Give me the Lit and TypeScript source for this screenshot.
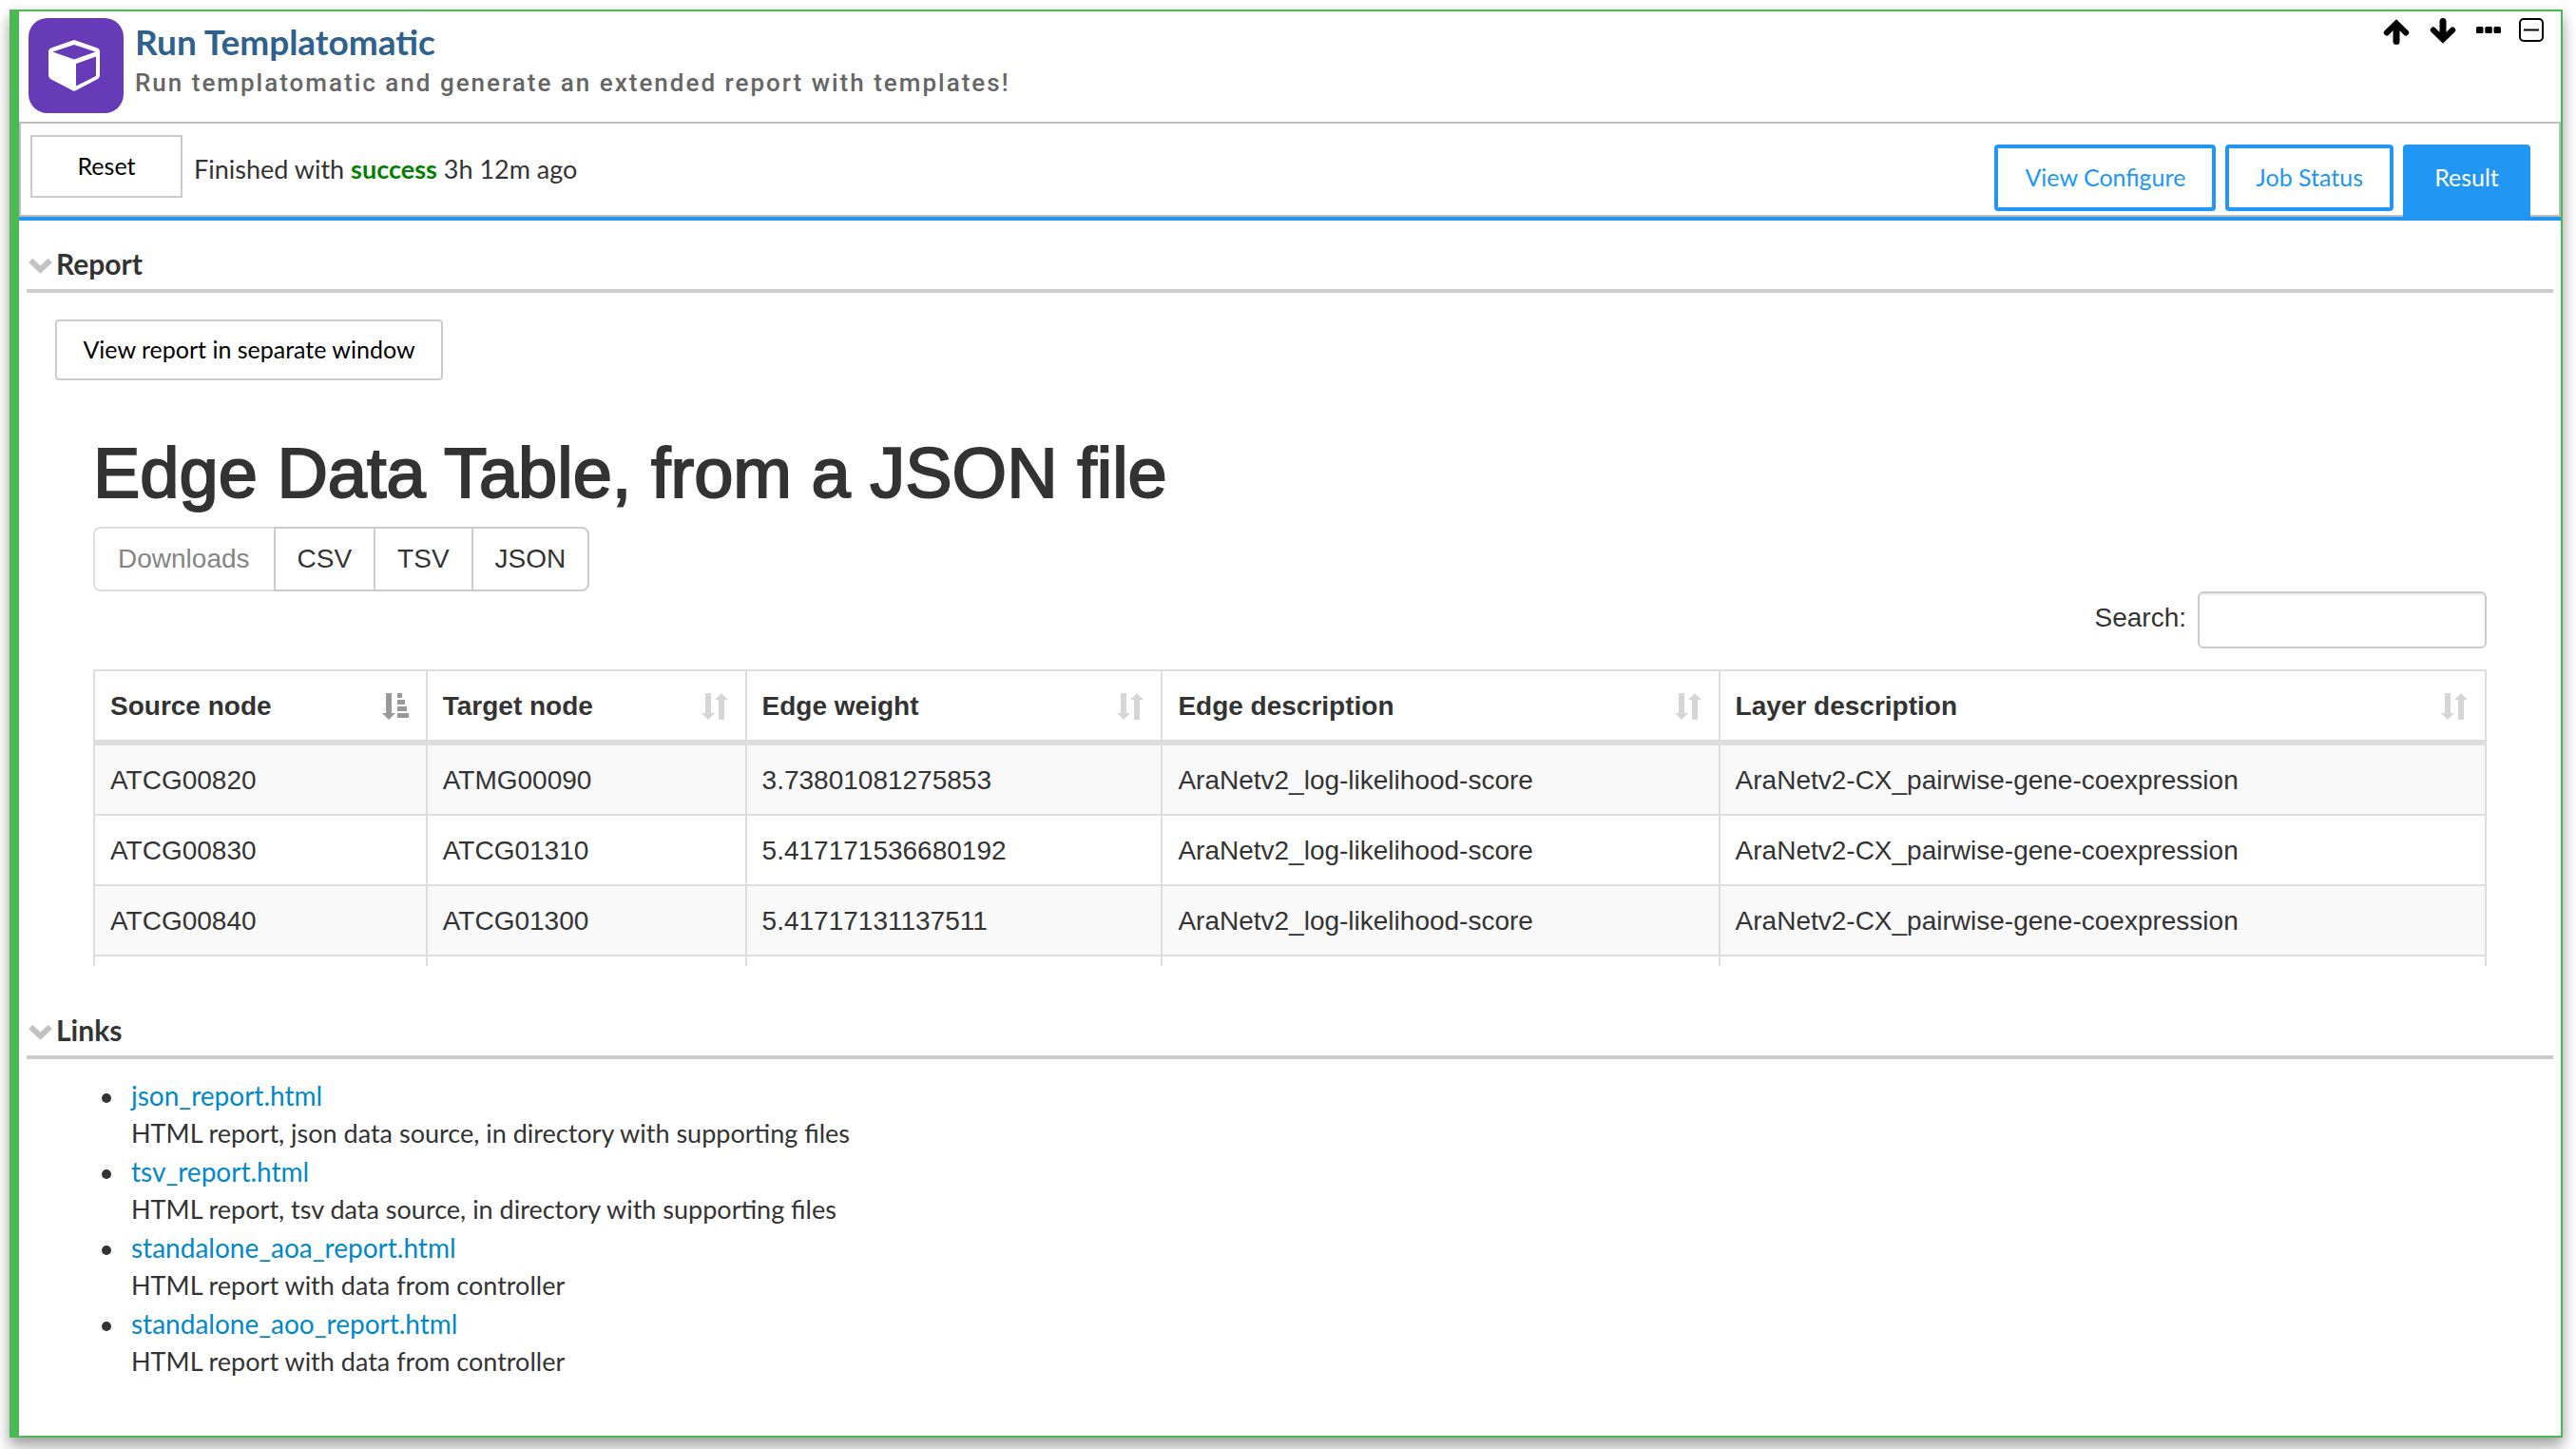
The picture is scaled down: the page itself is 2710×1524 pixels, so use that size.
import { LitElement, html, css, svg, nothing } from "lit";
import { customElement, state } from "lit/decorators.js";

interface Edge {
  source: string;
  target: string;
  weight: string;
}

const EDGES: Edge[] = [
  { source: "ATCG00820", target: "ATMG00090", weight: "3.73801081275853" },
  { source: "ATCG00830", target: "ATCG01310", weight: "5.417171536680192" },
  { source: "ATCG00840", target: "ATCG01300", weight: "5.41717131137511" },
];

const COLUMNS = [
  { label: "Source node", cls: "c-source" },
  { label: "Target node", cls: "c-target" },
  { label: "Edge weight", cls: "c-weight" },
  { label: "Edge description", cls: "c-edge" },
  { label: "Layer description", cls: "c-layer" },
];

const LINKS = [
  { file: "json_report.html", note: "HTML report, json data source, in directory with supporting files" },
  { file: "tsv_report.html", note: "HTML report, tsv data source, in directory with supporting files" },
  { file: "standalone_aoa_report.html", note: "HTML report with data from controller" },
  { file: "standalone_aoo_report.html", note: "HTML report with data from controller" },
];

const sortedIcon = svg`<path d="M4 0h6v21h4l-7 7-7-7h4z M16 0h5v5h-5z M16 7h8v5h-8z M16 14h10v5h-10z M16 21h12v5h-12z"/>`;
const sortableIcon = svg`<path d="M4 0h6v21h4l-7 7-7-7h4z M18 28h6v-21h4l-7-7-7 7h4z"/>`;

@customElement("report-table")
export class ReportTable extends LitElement {
  static styles = css`
    :host {
      display: block;
      font-family: "Liberation Sans", Arial, sans-serif;
      font-size: 28px;
      line-height: 40px;
      color: #333;
    }
    .title {
      margin: 0;
      padding-top: 2px;
      font-size: 74px;
      line-height: 80px;
      font-weight: 400;
      -webkit-text-stroke: 2px #333;
    }
    .downloads {
      display: flex;
      margin-top: 16px;
    }
    .btn {
      box-sizing: border-box;
      height: 68px;
      padding: 0 23px;
      border: 2px solid #ccc;
      margin-left: -2px;
      background: #fff;
      color: #333;
      font: inherit;
    }
    .btn:first-child {
      margin-left: 0;
      border-radius: 8px 0 0 8px;
      border-right: 0;
      border-color: #ddd;
      color: #858585;
      padding: 0 27px 0 24px;
    }
    .btn:last-child {
      border-radius: 0 8px 8px 0;
    }
    .search {
      display: flex;
      justify-content: flex-end;
      gap: 12px;
      line-height: 56px;
    }
    .search input {
      box-sizing: border-box;
      width: 304px;
      height: 60px;
      padding: 0 12px;
      border: 2px solid #ccc;
      border-radius: 6px;
      box-shadow: inset 0 2px 2px rgba(0, 0, 0, 0.08);
      font: inherit;
      color: inherit;
      background: #fff;
    }
    .grid {
      width: 100%;
      margin-top: 22px;
      table-layout: fixed;
      border-collapse: separate;
      border-spacing: 0;
      border-left: 2px solid #ddd;
      border-top: 2px solid #ddd;
    }
    .c-source { width: 13.9%; }
    .c-target { width: 13.35%; }
    .c-weight { width: 17.4%; }
    .c-edge { width: 23.3%; }
    .grid th,
    .grid td {
      box-sizing: border-box;
      padding: 17px 16px 15px;
      border-right: 2px solid #ddd;
      border-bottom: 2px solid #ddd;
      text-align: left;
      white-space: nowrap;
    }
    .grid th {
      padding-right: 18px;
      border-bottom-width: 6px;
    }
    .grid tbody tr:nth-child(odd) {
      background: #f9f9f9;
    }
    .grid .tail td {
      padding: 5px 16px;
      border-bottom: 0;
      background: #fff;
    }
    .head {
      display: flex;
      align-items: center;
      justify-content: space-between;
      font-weight: 700;
    }
    .sort {
      display: flex;
      padding: 0;
      border: 0;
      background: none;
      color: #d6d6d6;
    }
    .sort.active {
      color: #999;
    }
    .sort svg {
      width: 28px;
      height: 28px;
      fill: currentColor;
    }
  `;

  render() {
    return html`
      <h1 class="title">Edge Data Table, from a JSON file</h1>
      <div class="downloads">
        <button class="btn" disabled>Downloads</button>
        <button class="btn">CSV</button>
        <button class="btn">TSV</button>
        <button class="btn">JSON</button>
      </div>
      <div class="search">
        <label for="search">Search:</label>
        <input id="search" type="search" />
      </div>
      <table class="grid">
        <thead>
          <tr>
            ${COLUMNS.map(
              (c, i) => html`<th class=${c.cls} scope="col">
                <div class="head">
                  <span>${c.label}</span>
                  <button class=${i === 0 ? "sort active" : "sort"} aria-label="Sort by ${c.label}">
                    <svg viewBox="0 0 28 28" aria-hidden="true">${i === 0 ? sortedIcon : sortableIcon}</svg>
                  </button>
                </div>
              </th>`
            )}
          </tr>
        </thead>
        <tbody>
          ${EDGES.map(
            (e) => html`<tr>
              <td>${e.source}</td>
              <td>${e.target}</td>
              <td>${e.weight}</td>
              <td>AraNetv2_log-likelihood-score</td>
              <td>AraNetv2-CX_pairwise-gene-coexpression</td>
            </tr>`
          )}
          <tr class="tail">
            <td></td><td></td><td></td><td></td><td></td>
          </tr>
        </tbody>
      </table>
    `;
  }
}

@customElement("app-root")
export class AppRoot extends LitElement {
  static styles = css`
    :host {
      display: block;
      box-sizing: border-box;
      min-height: 100vh;
      padding: 10px 14px 12px 10px;
      background: #fff;
      font-family: Lato, "Open Sans", sans-serif;
      font-size: 27px;
      line-height: 40px;
      color: #333;
    }
    button {
      font-family: inherit;
      cursor: pointer;
    }
    .card {
      box-sizing: border-box;
      min-height: calc(100vh - 22px);
      border: 2px solid #4bb854;
      border-left-width: 10px;
      background: #fff;
      box-shadow: 0 12px 16px rgba(0, 0, 0, 0.24), 0 4px 12px rgba(0, 0, 0, 0.2);
    }
    .header {
      display: flex;
      gap: 12px;
      padding: 7px 16px 9px 10px;
    }
    .logo {
      width: 100px;
      height: 100px;
      flex: none;
    }
    .names {
      flex: 1;
      padding-top: 2px;
    }
    .name {
      margin: 0;
      font-size: 37px;
      line-height: 46px;
      font-weight: 700;
      color: #2e618d;
    }
    .about {
      margin: 0;
      font-family: Roboto, sans-serif;
      font-size: 26px;
      font-weight: 500;
      line-height: 40px;
      letter-spacing: 2px;
      color: #666;
    }
    .tools {
      display: flex;
      align-items: flex-start;
      gap: 20px;
    }
    .tool {
      display: flex;
      padding: 0;
      border: 0;
      background: none;
      color: #000;
    }
    .tool svg {
      width: 28px;
      height: 28px;
      overflow: visible;
    }
    .toolbar {
      display: flex;
      align-items: flex-start;
      box-sizing: border-box;
      height: 100px;
      padding: 12px 30px 0 10px;
      border: 2px solid #bdbdbd;
    }
    .plain {
      box-sizing: border-box;
      padding: 0 24px 2px;
      border: 2px solid #ccc;
      background: #fff;
      color: #000;
      font-size: 25px;
    }
    .reset {
      width: 160px;
      height: 66px;
    }
    .status {
      flex: 1;
      margin: 16px 12px 0;
    }
    .ok {
      color: #008000;
      font-weight: 700;
    }
    .tabs {
      display: flex;
      align-items: flex-start;
      gap: 10px;
      margin-top: 10px;
    }
    .tab {
      box-sizing: border-box;
      min-width: 134px;
      height: 70px;
      padding: 0 28px 2px;
      border: 4px solid #2196f3;
      border-radius: 4px;
      background: #fff;
      color: #2196f3;
      font-size: 25px;
      line-height: 60px;
    }
    .tab.on {
      height: 76px;
      padding-bottom: 8px;
      border-radius: 4px 4px 0 0;
      background: #2196f3;
      color: #fff;
    }
    .rule {
      height: 4px;
      background: #2196f3;
    }
    .section {
      margin: 0 8px;
    }
    .section + .section {
      margin-top: 22px;
    }
    .section-head {
      margin: 0;
      border-bottom: 4px solid #ccc;
      font-size: 30px;
      line-height: 40px;
    }
    .toggle {
      display: flex;
      align-items: center;
      gap: 4px;
      width: 100%;
      padding: 25px 0 7px 2px;
      border: 0;
      background: none;
      color: #333;
      font-size: 30px;
      font-weight: 700;
      line-height: 40px;
    }
    .toggle svg {
      width: 25px;
      height: 17px;
      margin-top: 4px;
    }
    .report {
      padding: 28px 70px 0 30px;
    }
    .view {
      min-width: 408px;
      height: 64px;
      border-radius: 4px;
    }
    .frame {
      display: block;
      margin: 56px 0 0 40px;
    }
    .links {
      margin: 0;
      padding: 18px 0 48px 110px;
      font-size: 28px;
      list-style: none;
    }
    .links li::before {
      content: "";
      display: inline-block;
      width: 10px;
      height: 10px;
      margin: 0 21px 0 -31px;
      border-radius: 50%;
      background: #333;
      vertical-align: 3px;
    }
    .links a {
      color: #08c;
      text-decoration: none;
    }
    .note {
      display: block;
      font-size: 27px;
    }
  `;

  @state() private open = { report: true, links: true };

  private sectionHead(key: "report" | "links", label: string) {
    return html`<h2 class="section-head">
      <button
        class="toggle"
        aria-expanded=${this.open[key]}
        @click=${() => (this.open = { ...this.open, [key]: !this.open[key] })}
      >
        <svg viewBox="0 0 25 17" aria-hidden="true">
          <path d="M2.200 3 12.500 12.600 22.800 3" fill="none" stroke="#c2c2c2" stroke-width="6" />
        </svg>
        ${label}
      </button>
    </h2>`;
  }

  render() {
    return html`
      <main class="card">
        <header class="header">
          <svg class="logo" viewBox="0 0 100 100" aria-hidden="true">
            <rect width="100" height="100" rx="20" fill="#673ab7" />
            <path
              d="M48 23 23.500 31.500Q21 32.500 21 35V60Q21 62.500 23 64L46 76Q48 77.300 50 76L73 64Q75 62.500 75 60V35Q75 32.500 72.500 31.500Z"
              fill="#fff"
            />
            <path d="M48 28 70.500 35.500 48 43.500 25.500 35.500Z M50 48 71 40.500V61L50 71.500Z" fill="#673ab7" />
          </svg>
          <div class="names">
            <h1 class="name">Run Templatomatic</h1>
            <p class="about">Run templatomatic and generate an extended report with templates!</p>
          </div>
          <div class="tools">
            <button class="tool" aria-label="Move up">
              <svg viewBox="0 0 28 28" fill="none" stroke="#000" stroke-width="7" stroke-linecap="round">
                <path d="M15 7V24.500" />
                <path d="M4.800 15.500 15 5.500 25.200 15.500" stroke-width="6" />
              </svg>
            </button>
            <button class="tool" aria-label="Move down">
              <svg viewBox="0 0 28 28" fill="none" stroke="#000" stroke-width="7" stroke-linecap="round">
                <path d="M16 3.500V20" />
                <path d="M5.800 12.500 16 22.500 26.200 12.500" stroke-width="6" />
              </svg>
            </button>
            <button class="tool" aria-label="More">
              <svg viewBox="0 0 28 28">
                <rect x="3" y="9" width="7.500" height="7" rx="1.500" />
                <rect x="12.300" y="9" width="7.500" height="7" rx="1.500" />
                <rect x="21.500" y="9" width="7.500" height="7" rx="1.500" />
              </svg>
            </button>
            <button class="tool" aria-label="Collapse">
              <svg viewBox="0 0 28 28" fill="none" stroke="#000" stroke-width="2">
                <rect x="1" y="1" width="24" height="23" rx="4" />
                <path d="M5 12.500H21" />
              </svg>
            </button>
          </div>
        </header>

        <div class="toolbar">
          <button class="plain reset">Reset</button>
          <p class="status">Finished with <span class="ok">success</span> 3h 12m ago</p>
          <nav class="tabs">
            <button class="tab">View Configure</button>
            <button class="tab">Job Status</button>
            <button class="tab on" aria-current="page">Result</button>
          </nav>
        </div>
        <div class="rule"></div>

        <section class="section">
          ${this.sectionHead("report", "Report")}
          ${this.open.report
            ? html`<div class="report">
                <button class="plain view">View report in separate window</button>
                <report-table class="frame"></report-table>
              </div>`
            : nothing}
        </section>

        <section class="section">
          ${this.sectionHead("links", "Links")}
          ${this.open.links
            ? html`<ul class="links">
                ${LINKS.map((l) => html`<li><a href="#${l.file}">${l.file}</a><span class="note">${l.note}</span></li>`)}
              </ul>`
            : nothing}
        </section>
      </main>
    `;
  }
}
